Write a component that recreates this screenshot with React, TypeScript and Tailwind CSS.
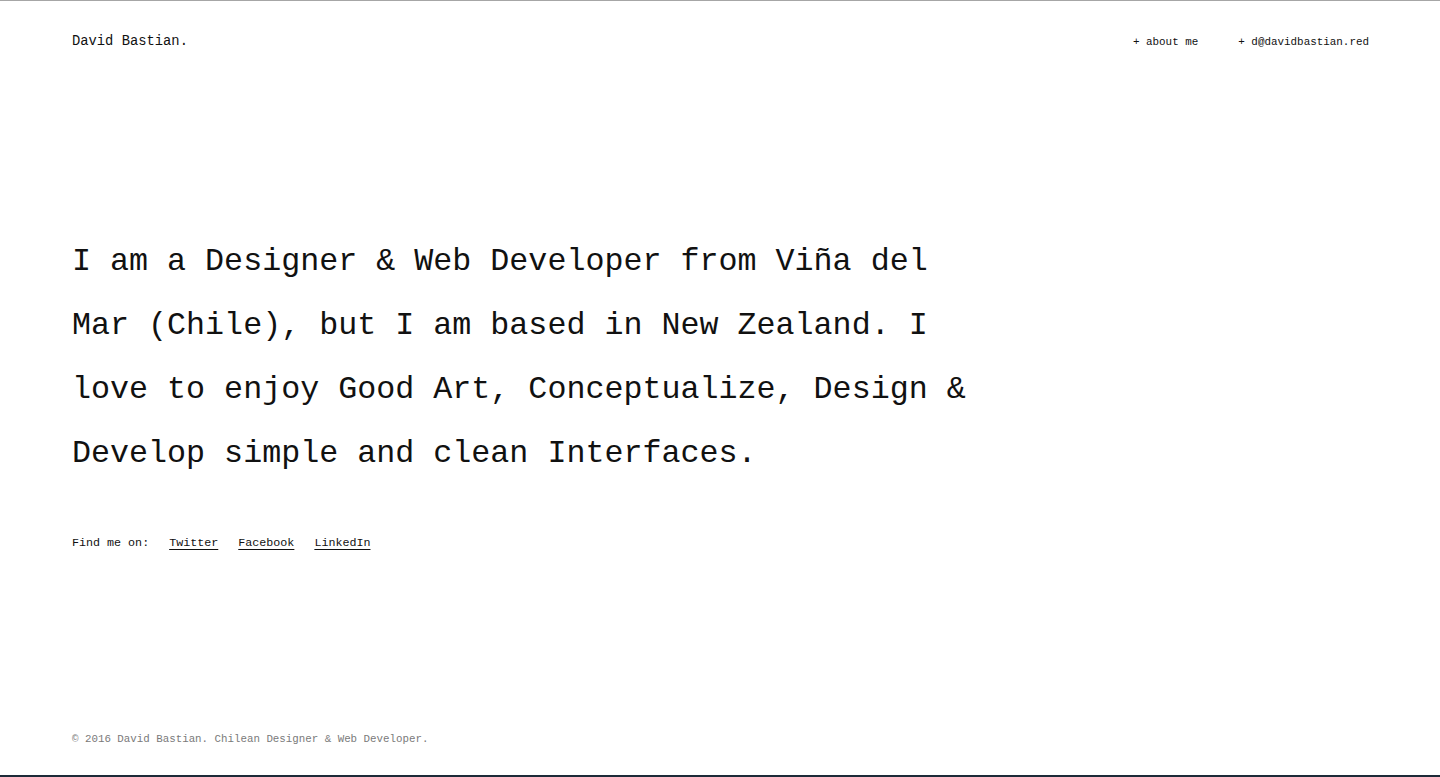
import React from "react";

const mono = { fontFamily: '"Liberation Mono", "DejaVu Sans Mono", monospace' };

function App() {
  return (
    <div
      className="h-screen flex flex-col bg-white text-[#111] border-t border-[#a6a6a6]"
      style={mono}
    >
      {/* header */}
      <div className="flex justify-between items-center pt-[31px] pl-[72px] pr-[71px]">
        <span className="text-[13.8px] leading-[20px]">David Bastian.</span>
        <div className="flex gap-[40px] text-[10.9px] leading-[20px]">
          <a className="cursor-pointer">+ about me</a>
          <a className="cursor-pointer">+ d@davidbastian.red</a>
        </div>
      </div>

      {/* intro */}
      <div className="pl-[72px] mt-[178px]">
        <p className="text-[31.7px] leading-[64px] max-w-[910px]">
          I am a Designer &amp; Web Developer from Viña del Mar (Chile), but I
          am based in New Zealand. I love to enjoy Good Art, Conceptualize,
          Design &amp; Develop simple and clean Interfaces.
        </p>

        <div className="flex items-center gap-[20px] mt-[48px] text-[11.7px] leading-[18px]">
          <span>Find me on:</span>
          <a className="underline underline-offset-[3px] cursor-pointer">Twitter</a>
          <a className="underline underline-offset-[3px] cursor-pointer">Facebook</a>
          <a className="underline underline-offset-[3px] cursor-pointer">LinkedIn</a>
        </div>
      </div>

      {/* footer */}
      <div className="mt-auto pl-[72px] pb-[28px] text-[10.8px] leading-[16px] text-[#7a7a7a]">
        © 2016 David Bastian. Chilean Designer &amp; Web Developer.
      </div>
      <div className="h-[2px] bg-[#1d2b38]"></div>
    </div>
  );
}

export default App;
